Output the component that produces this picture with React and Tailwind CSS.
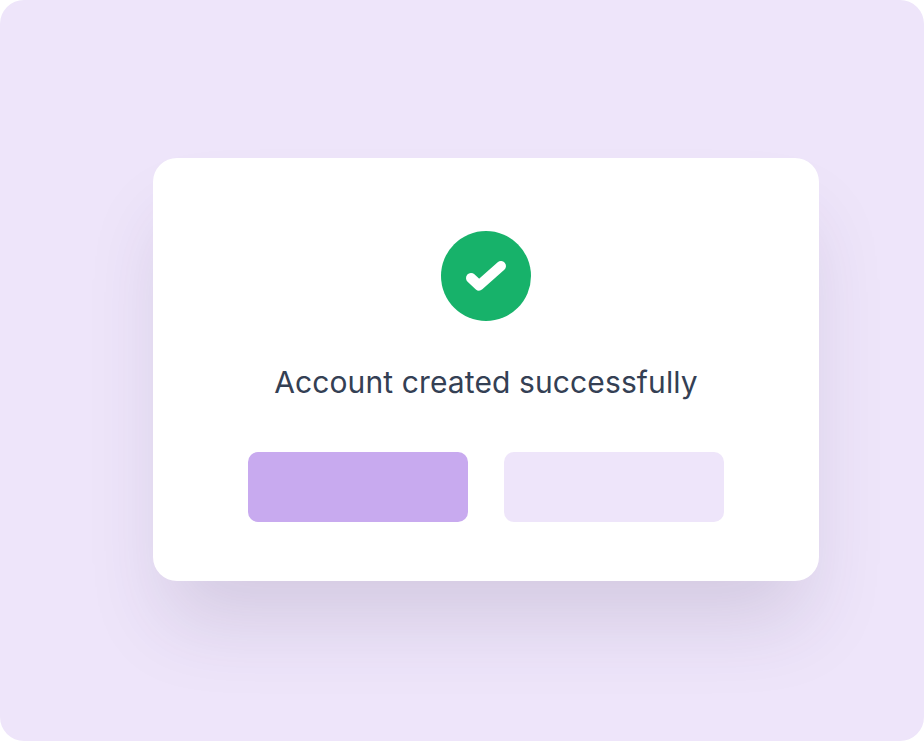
export default function App() {
  return (
    <div className="h-[741px] w-[924px] overflow-hidden rounded-[24px] bg-[#eee5fa] pl-[153px] pt-[158px]" style={{ fontFamily: '"Inter", sans-serif' }}>
      <div className="flex h-[423px] w-[666px] flex-col items-center rounded-[24px] bg-white px-[95px] pt-[73px] shadow-[0_52px_80px_-14px_rgba(60,50,90,0.15)]">
        <div className="flex h-[90px] w-[90px] items-center justify-center rounded-full bg-[#17b26a]">
          <svg width="90" height="90" viewBox="0 0 90 90" fill="none">
            <path d="M30 47L38 54.5L60 35" stroke="white" strokeWidth="10" strokeLinecap="round" strokeLinejoin="round" />
          </svg>
        </div>
        <h1 className="mt-[41px] whitespace-nowrap text-[30px] font-normal leading-[40px] tracking-[0.11px] text-[#344054]">Account created successfully</h1>
        <div className="mt-[50px] flex w-full gap-[36px]">
          <div className="h-[70px] flex-1 rounded-[10px] bg-[#c8aaef]"></div>
          <div className="h-[70px] flex-1 rounded-[10px] bg-[#eee5fa]"></div>
        </div>
      </div>
    </div>
  );
}
